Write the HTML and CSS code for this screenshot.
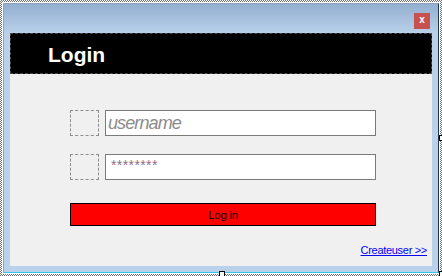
FILE: index.html
```html
<!DOCTYPE html>
<html>
<head>
<meta charset="utf-8">
<title>Login</title>
<link rel="stylesheet" href="styles.css">
</head>
<body>
<div class="designer">
  <div class="surface">
    <div class="window">
      <div class="titlebar">
        <div class="close">x</div>
      </div>
      <div class="client">
        <div class="header">Login</div>
        <div class="form">
          <div class="row">
            <div class="icon-slot"></div>
            <input class="field field-user" type="text" placeholder="username">
          </div>
          <div class="row">
            <div class="icon-slot"></div>
            <input class="field field-pass" type="text" placeholder="********">
          </div>
          <button class="login-btn">Log in</button>
        </div>
        <div class="footer">
          <a class="create-link" href="#">Createuser &gt;&gt;</a>
        </div>
      </div>
    </div>
  </div>
  <!-- designer grab handles -->
  <div class="handle handle-right"></div>
  <div class="handle handle-bottom"></div>
  <div class="handle handle-corner"></div>
</div>
</body>
</html>
```
FILE: styles.css
```css
* {
  box-sizing: border-box;
}
html, body {
  margin: 0;
  width: 442px;
  height: 276px;
  overflow: hidden;
  background: #fff;
  font-family: "Liberation Sans", Arial, sans-serif;
}
.designer {
  position: relative;
  width: 442px;
  height: 276px;
  padding: 2px;
  background: repeating-conic-gradient(#6e6e6e 0 25%, #fff 0 50%) 0 0 / 2px 2px;
}
.surface {
  width: 100%;
  height: 100%;
  padding: 1px;
  background: #fff;
}
.window {
  width: 436px;
  height: 270px;
  display: flex;
  flex-direction: column;
  padding: 0 6px 6px 6px;
  border: 1px solid #8ea4bf;
  border-right-color: #1f3850;
  border-bottom-color: #39c4ee;
  background: linear-gradient(#93afd0 0, #b9d1ea 29px, #b9d1ea 100%);
}
.titlebar {
  height: 29px;
  display: flex;
  justify-content: flex-end;
  align-items: flex-end;
  padding: 0 2px 4px 0;
}
.close {
  width: 16px;
  height: 16px;
  background: #c75050;
  color: #fff;
  font-size: 10px;
  font-weight: bold;
  line-height: 14px;
  text-align: center;
}
.client {
  flex: 1;
  display: flex;
  flex-direction: column;
  background: #f0f0f0;
}
.header {
  height: 41px;
  background: #000;
  border: 1px dashed #4a4a4a;
  color: #fff;
  font-size: 21px;
  font-weight: bold;
  line-height: 37px;
  padding: 2px 0 0 37px;
}
.form {
  display: flex;
  flex-direction: column;
  gap: 18px;
  margin-top: 36px;
  padding-left: 60px;
}
.row {
  display: flex;
  gap: 6px;
}
.icon-slot {
  width: 29px;
  height: 26px;
  border: 1px dashed #8c8c8c;
}
.field {
  width: 271px;
  height: 26px;
  margin: 0;
  border: 1px solid #7a7a7a;
  background: #fff;
  outline: none;
  font-family: "Liberation Sans", Arial, sans-serif;
}
.field-user {
  padding: 0 0 0 2px;
  font-size: 18px;
  font-style: italic;
  letter-spacing: -0.9px;
}
.field-user::placeholder {
  color: #8b8b8b;
}
.field-pass {
  padding: 0 0 5px 5px;
  font-size: 14px;
  letter-spacing: 0.4px;
}
.field-pass::placeholder {
  color: #8e7088;
}
.login-btn {
  width: 306px;
  height: 23px;
  margin-top: 5px;
  padding: 0;
  border: 1px solid #000;
  background: #ff0000;
  color: #000;
  font-family: "Liberation Sans", Arial, sans-serif;
  font-size: 11.5px;
  letter-spacing: -0.3px;
}
.footer {
  display: flex;
  justify-content: flex-end;
  padding-right: 5px;
  margin-top: 18px;
  line-height: 13px;
}
.create-link {
  color: #0000ff;
  font-size: 11px;
  letter-spacing: -0.3px;
}
.handle {
  position: absolute;
  width: 6px;
  height: 6px;
  background: #fff;
  border: 1px solid #000;
}
.handle-right {
  left: 439px;
  top: 135px;
}
.handle-bottom {
  left: 219px;
  top: 271px;
}
.handle-corner {
  left: 439px;
  top: 271px;
}
```
